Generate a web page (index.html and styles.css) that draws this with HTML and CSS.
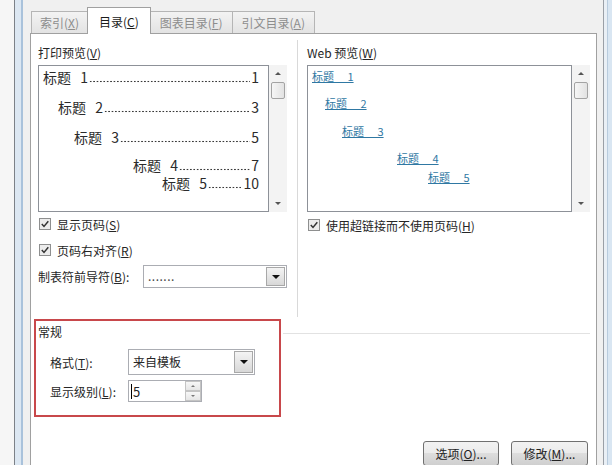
FILE: index.html
```html
<!DOCTYPE html>
<html lang="zh-CN">
<head>
    <meta charset="UTF-8">
    <title>目录</title>
    <link rel="stylesheet" href="styles.css">
</head>
<body>
<div class="screen">
    <div class="frame-left"></div>

    <div class="dialog">
        <div class="tabs">
            <div class="tab">索引(<u>X</u>)</div>
            <div class="tab tab-active">目录(<u>C</u>)</div>
            <div class="tab">图表目录(<u>F</u>)</div>
            <div class="tab">引文目录(<u>A</u>)</div>
        </div>

        <div class="panel">
            <div class="columns">
                <!-- 打印预览 -->
                <div class="col col-print">
                    <div class="label">打印预览(<u>V</u>)</div>
                    <div class="preview">
                        <div class="preview-box">
                            <div class="toc-row lvl1"><span class="toc-title">标题 1</span><span class="leader"></span><span>1</span></div>
                            <div class="toc-row lvl2"><span class="toc-title">标题 2</span><span class="leader"></span><span>3</span></div>
                            <div class="toc-row lvl3"><span class="toc-title">标题 3</span><span class="leader"></span><span>5</span></div>
                            <div class="toc-row lvl4"><span class="toc-title">标题 4</span><span class="leader"></span><span>7</span></div>
                            <div class="toc-row lvl5"><span class="toc-title">标题 5</span><span class="leader"></span><span>10</span></div>
                        </div>
                        <div class="scrollbar">
                            <div class="scroll-btn"><span class="arrow-up"></span></div>
                            <div class="scroll-thumb"></div>
                            <div class="scroll-track"></div>
                            <div class="scroll-btn"><span class="arrow-down"></span></div>
                        </div>
                    </div>

                    <div class="check check-first">
                        <svg class="box" width="12" height="12" viewBox="0 0 12 12"><rect x="0.5" y="0.5" width="11" height="11" fill="#ececec" stroke="#8e8f8f"/><path d="M2.8 6 L5 8.4 L9.3 3.2" fill="none" stroke="#333" stroke-width="1.5"/></svg>
                        <span>显示页码(<u>S</u>)</span>
                    </div>
                    <div class="check check-second">
                        <svg class="box" width="12" height="12" viewBox="0 0 12 12"><rect x="0.5" y="0.5" width="11" height="11" fill="#ececec" stroke="#8e8f8f"/><path d="M2.8 6 L5 8.4 L9.3 3.2" fill="none" stroke="#333" stroke-width="1.5"/></svg>
                        <span>页码右对齐(<u>R</u>)</span>
                    </div>

                    <div class="field-row">
                        <span class="field-label">制表符前导符(<u>B</u>):</span>
                        <div class="select select-leader">
                            <span class="select-value leader-value">.......</span>
                            <span class="select-btn"><span class="arrow-down dark"></span></span>
                        </div>
                    </div>
                </div>

                <!-- Web 预览 -->
                <div class="col col-web">
                    <div class="label">Web 预览(<u>W</u>)</div>
                    <div class="preview">
                        <div class="preview-box web-box">
                            <div class="web-row lvl1"><a>标题 1</a></div>
                            <div class="web-row lvl2"><a>标题 2</a></div>
                            <div class="web-row lvl3"><a>标题 3</a></div>
                            <div class="web-row lvl4"><a>标题 4</a></div>
                            <div class="web-row lvl5"><a>标题 5</a></div>
                        </div>
                        <div class="scrollbar">
                            <div class="scroll-btn"><span class="arrow-up"></span></div>
                            <div class="scroll-thumb"></div>
                            <div class="scroll-track"></div>
                            <div class="scroll-btn"><span class="arrow-down"></span></div>
                        </div>
                    </div>

                    <div class="check check-web">
                        <svg class="box" width="12" height="12" viewBox="0 0 12 12"><rect x="0.5" y="0.5" width="11" height="11" fill="#ececec" stroke="#8e8f8f"/><path d="M2.8 6 L5 8.4 L9.3 3.2" fill="none" stroke="#333" stroke-width="1.5"/></svg>
                        <span>使用超链接而不使用页码(<u>H</u>)</span>
                    </div>
                </div>
            </div>

            <!-- 常规 -->
            <div class="general-row">
                <div class="general">
                    <div class="group-title">常规</div>
                    <div class="form-row form-format">
                        <span class="form-label">格式(<u>T</u>):</span>
                        <div class="select select-format">
                            <span class="select-value">来自模板</span>
                            <span class="select-btn"><span class="arrow-down dark"></span></span>
                        </div>
                    </div>
                    <div class="form-row form-level">
                        <span class="form-label">显示级别(<u>L</u>):</span>
                        <div class="spinner">
                            <span class="spin-value"><span class="caret"></span>5</span>
                            <span class="spin-btns">
                                <span class="spin-btn"><span class="tiny-up"></span></span>
                                <span class="spin-btn"><span class="tiny-down"></span></span>
                            </span>
                        </div>
                    </div>
                </div>
                <div class="general-rule"></div>
            </div>

            <div class="actions">
                <button class="btn btn-options">选项(<u>O</u>)...</button>
                <button class="btn btn-modify">修改(<u>M</u>)...</button>
            </div>
        </div>
    </div>

    <div class="frame-right"></div>
</div>
</body>
</html>
```

FILE: styles.css
```css
body {
    margin: 0;
    font-family: "Noto Sans CJK SC", "Liberation Sans", sans-serif;
    font-size: 12px;
    color: #262626;
}

.screen {
    display: flex;
    width: 612px;
    height: 465px;
    overflow: hidden;
    background-color: #f0f0f0;
}

/* window frame */
.frame-left {
    width: 23px;
    background: linear-gradient(to right, #f6f6f6 0 14px, #7c8188 14px 15px, #dce7f2 15px 21px, #a9c2db 21px 23px);
}

.frame-right {
    width: 12px;
    background: linear-gradient(to right, #f0f0f0 0 3px, #9a9fa6 3px 4px, #e9eff5 4px 7px, #b8cbdd 7px 8px, #d9e6f2 8px);
}

.dialog {
    flex: 1;
    display: flex;
    flex-direction: column;
    padding: 8px 3px 0 7px;
}

/* tabs */
.tabs {
    display: flex;
    align-items: flex-end;
    height: 25px;
    padding-left: 1px;
}

.tab {
    height: 22px;
    line-height: 21px;
    padding: 0 8px;
    margin-right: -1px;
    border: 1px solid #b5b5b5;
    border-bottom: none;
    box-sizing: border-box;
    background: linear-gradient(#f3f3f3, #e3e3e3);
    color: #8d8d8d;
}

    .tab:nth-child(3),
    .tab:nth-child(4) {
        padding: 0 9px;
    }

.tab-active {
    position: relative;
    z-index: 1;
    height: 27px;
    line-height: 27px;
    margin-bottom: -1px;
    padding: 0 11px 0 11px;
    background: #ffffff;
    border-color: #a0a0a0;
    color: #1a1a1a;
}

.panel {
    flex: 1;
    background-color: #ffffff;
    border: 1px solid #a0a0a0;
    border-bottom: none;
    padding: 0 6px 0 7px;
}

.columns {
    display: flex;
    height: 277px;
    margin-top: 6px;
}

.col {
    padding-top: 5px;
}

.col-print {
    width: 259px;
}

.col-web {
    flex: 1;
    border-left: 1px solid #d9d9d9;
    padding-left: 9px;
}

.label {
    height: 16px;
    line-height: 16px;
    margin-bottom: 4px;
}

/* preview boxes */
.preview {
    display: flex;
    height: 147px;
}

.col-print .preview {
    width: 249px;
}

.preview-box {
    flex: 1;
    border: 1px solid #8d9198;
    padding: 3px 9px 0 4px;
    overflow: hidden;
}

.toc-row {
    display: flex;
    height: 16px;
    line-height: 16px;
    font-size: 14px;
    color: #2b2b2b;
    white-space: nowrap;
}

    .toc-row.lvl2 { margin-top: 14px; padding-left: 15px; }
    .toc-row.lvl3 { margin-top: 14px; padding-left: 31px; }
    .toc-row.lvl4 { margin-top: 12px; padding-left: 90px; }
    .toc-row.lvl5 { margin-top: 2px; padding-left: 119px; }

.toc-title {
    word-spacing: 6px;
}

/* dotted tab leader */
.leader {
    flex: 1;
    margin: 0 1px;
    background-image: radial-gradient(circle, #3a3a3a 0.7px, transparent 1.1px);
    background-size: 3.4px 3px;
    background-position: 0 11px;
    background-repeat: repeat-x;
}

.web-box {
    padding: 2px 4px 0 4px;
}

.web-row {
    height: 16px;
    line-height: 16px;
    font-size: 11px;
}

    .web-row a {
        color: #2f78a3;
        text-decoration: underline;
        word-spacing: 11px;
    }

    .web-row.lvl2 { margin-top: 11px; padding-left: 13px; }
    .web-row.lvl3 { margin-top: 12px; padding-left: 30px; }
    .web-row.lvl4 { margin-top: 11px; padding-left: 85px; }
    .web-row.lvl5 { margin-top: 3px; padding-left: 116px; }

/* scrollbar */
.scrollbar {
    display: flex;
    flex-direction: column;
    width: 18px;
    background-color: #f3f3f3;
}

.scroll-btn {
    display: flex;
    align-items: center;
    justify-content: center;
    height: 17px;
}

.scroll-thumb {
    height: 15px;
    margin: 0 2px;
    border: 1px solid #a3a3a3;
    border-radius: 2px;
    background: linear-gradient(to right, #f6f6f6, #e2e2e2);
}

.scroll-track {
    flex: 1;
}

.arrow-up {
    width: 0;
    height: 0;
    border-left: 3px solid transparent;
    border-right: 3px solid transparent;
    border-bottom: 3px solid #555;
}

.arrow-down {
    width: 0;
    height: 0;
    border-left: 3px solid transparent;
    border-right: 3px solid transparent;
    border-top: 3px solid #555;
}

    .arrow-down.dark {
        border-left-width: 4px;
        border-right-width: 4px;
        border-top: 4px solid #111;
    }

/* checkboxes */
.check {
    display: flex;
    align-items: center;
    height: 16px;
    padding-left: 1px;
}

    .check .box {
        margin-right: 6px;
    }

.check-first { margin-top: 4px; }
.check-second { margin-top: 10px; }
.check-web { margin-top: 5px; }

/* select boxes */
.field-row {
    display: flex;
    align-items: center;
    margin-top: 7px;
}

.field-label {
    width: 105px;
}

.select {
    display: flex;
    border: 1px solid #abadb3;
    background-color: #ffffff;
    box-sizing: border-box;
}

.select-value {
    flex: 1;
    padding-left: 4px;
    line-height: 20px;
}

.leader-value {
    letter-spacing: 0.5px;
    color: #444;
}

.select-btn {
    display: flex;
    align-items: center;
    justify-content: center;
    width: 17px;
    border: 1px solid #a8a8a8;
    margin: 1px;
    background: linear-gradient(#f4f4f4, #e6e6e6 50%, #d8d8d8);
}

.select-leader {
    width: 144px;
    height: 23px;
}

.select-format {
    width: 127px;
    height: 26px;
}

    .select-format .select-value {
        line-height: 24px;
    }

/* 常规 */
.general-row {
    display: flex;
    margin-top: 2px;
    margin-left: -4px;
}

.general {
    width: 247px;
    height: 98px;
    border: 2px solid #c8484b;
    box-sizing: border-box;
    padding: 3px 0 0 2px;
}

.general-rule {
    flex: 1;
    margin: 14px 0 0 2px;
    border-top: 1px solid #e2e2e2;
}

.group-title {
    height: 16px;
    line-height: 16px;
}

.form-row {
    display: flex;
    align-items: center;
    padding-left: 12px;
}

.form-format { margin-top: 9px; }
.form-level { margin-top: 5px; }

.form-label {
    width: 78px;
}

.spinner {
    display: flex;
    width: 74px;
    height: 22px;
    border: 1px solid #abadb3;
    box-sizing: border-box;
}

.spin-value {
    flex: 1;
    display: flex;
    align-items: center;
    padding-left: 2px;
    font-size: 13px;
}

.caret {
    width: 1px;
    height: 15px;
    background-color: #000;
    margin-right: 1px;
}

.spin-btns {
    display: flex;
    flex-direction: column;
    width: 16px;
}

.spin-btn {
    flex: 1;
    display: flex;
    align-items: center;
    justify-content: center;
    border: 1px solid #c4c4c4;
    background: linear-gradient(#f7f7f7, #e6e6e6);
}

.tiny-up {
    border-left: 2px solid transparent;
    border-right: 2px solid transparent;
    border-bottom: 2px solid #777;
}

.tiny-down {
    border-left: 2px solid transparent;
    border-right: 2px solid transparent;
    border-top: 2px solid #777;
}

/* buttons */
.actions {
    display: flex;
    justify-content: flex-end;
    gap: 12px;
    margin-top: 24px;
    padding-right: 2px;
}

.btn {
    height: 25px;
    padding: 0;
    border: 1px solid #707070;
    border-radius: 3px;
    background: linear-gradient(#f2f2f2, #ebebeb 50%, #dddddd 50%, #cfcfcf);
    font-family: "Noto Sans CJK SC", "Liberation Sans", sans-serif;
    font-size: 12px;
    color: #222;
}

.btn-options { width: 76px; }
.btn-modify { width: 77px; }
```
